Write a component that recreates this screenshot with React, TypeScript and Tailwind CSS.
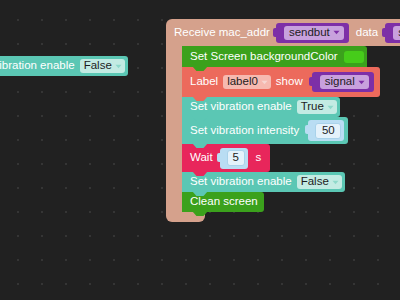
import React from "react";

const Arrow = ({ color }: { color: string }) => (
  <svg width="7" height="5" viewBox="0 0 7 5" className="ml-[3px] shrink-0">
    <path d="M0.5 0.8 L6.5 0.8 L3.5 4.2 Z" fill={color} />
  </svg>
);

const Tab = ({ cls }: { cls: string }) => (
  <div
    className={`absolute left-[10px] bottom-[-4px] w-[16px] h-[5px] z-10 [clip-path:polygon(0_0,100%_0,72%_100%,28%_100%)] ${cls}`}
  />
);

const Dropdown = ({ text, bg, arrow }: { text: string; bg: string; arrow: string }) => (
  <div className={`flex items-center shrink-0 h-[14px] pl-[4px] pr-[3px] rounded-[3px] text-[#1d1d1d] ${bg}`}>
    <span>{text}</span>
    <Arrow color={arrow} />
  </div>
);

const PurpleVar = ({ text, cut }: { text: string; cut?: boolean }) => (
  <div className="relative flex items-center shrink-0 h-[20px] bg-[#7d2fa7] rounded-[3px] pl-[8px] pr-[5px]">
    <div className="absolute left-[-3px] top-[5px] w-[5px] h-[9px] bg-[#7d2fa7] rounded-l-[2px]" />
    <div className="flex items-center h-[14px] pl-[5px] pr-[4px] rounded-[3px] bg-[#c8a1dd] text-[#1d1d1d]">
      <span>{text}</span>
      {!cut && <Arrow color="#7d2fa7" />}
    </div>
  </div>
);

const NumBlock = ({ text, w }: { text: string; w: string }) => (
  <div className="relative flex items-center shrink-0 h-[21px] bg-[#b9ddf3] rounded-[3px] pl-[7px] pr-[3px]">
    <div className="absolute left-[-3px] top-[5px] w-[5px] h-[9px] bg-[#b9ddf3] rounded-l-[2px]" />
    <div className={`flex items-center justify-center h-[16px] ${w} rounded-[3px] bg-[#e4f2fb] border border-[#a9d2ea] text-[#1d1d1d]`}>
      {text}
    </div>
  </div>
);

export default function App() {
  return (
    <div className="relative w-[400px] h-[300px] overflow-hidden whitespace-nowrap bg-[#212121] bg-[radial-gradient(circle,#353535_1px,transparent_1.2px)] bg-[size:24px_24px] bg-[position:6px_8px] font-['Liberation_Sans',Arial,sans-serif] text-[11.5px] text-white leading-none">
      {/* partial block on the left */}
      <div className="absolute left-[-35px] top-[56px] min-w-[163px] h-[20px] bg-[#5bc7b4] rounded-[3px] flex items-center pl-[8px] pr-[3px] gap-[5px]">
        <span className="shrink-0">Set vibration enable</span>
        <Dropdown text="False" bg="bg-[#c3ebe3]" arrow="#8fd9cb" />
      </div>

      {/* main receive block */}
      <div className="absolute left-[166px] top-[19px] flex flex-col">
        <div className="h-[27px] w-[260px] bg-[#d5a18c] rounded-tl-[6px] flex items-center pl-[8px] gap-[7px]">
          <span className="shrink-0 mr-[-1px]">Receive mac_addr</span>
          <PurpleVar text="sendbut" />
          <span className="shrink-0">data</span>
          <PurpleVar text="signa" cut />
        </div>
        <div className="flex">
          <div className="w-[16px] bg-[#d5a18c]" />
          <div className="flex flex-col items-start">
            <div className="relative h-[21px] min-w-[181px] bg-[#3ba11c] rounded-tr-[3px] flex items-center pl-[8px] pr-[3px] gap-[6px]">
              <span className="shrink-0">Set Screen backgroundColor</span>
              <div className="w-[20px] h-[12px] shrink-0 bg-[#46cc1a] rounded-[3px]" />
              <Tab cls="bg-[#3ba11c]" />
            </div>
            <div className="relative h-[30px] min-w-[198px] bg-[#ec6a5c] rounded-r-[3px] flex items-center pl-[8px] pr-[3px] gap-[5px]">
              <span className="shrink-0">Label</span>
              <Dropdown text="label0" bg="bg-[#f6b9b0]" arrow="#f6d6d1" />
              <span className="mr-[4px] shrink-0">show</span>
              <PurpleVar text="signal" />
              <Tab cls="bg-[#ec6a5c]" />
            </div>
            <div className="relative h-[20px] min-w-[157px] bg-[#5bc7b4] rounded-r-[3px] flex items-center pl-[8px] pr-[3px] gap-[5px]">
              <span className="shrink-0">Set vibration enable</span>
              <Dropdown text="True" bg="bg-[#c3ebe3]" arrow="#8fd9cb" />
              <Tab cls="bg-[#5bc7b4]" />
            </div>
            <div className="relative h-[27px] min-w-[166px] bg-[#5bc7b4] rounded-r-[3px] flex items-center pl-[8px] pr-[4px] gap-[9px]">
              <span className="shrink-0">Set vibration intensity</span>
              <NumBlock text="50" w="w-[26px]" />
              <Tab cls="bg-[#5bc7b4]" />
            </div>
            <div className="relative h-[28px] min-w-[88px] bg-[#e8265b] rounded-r-[3px] flex items-center pl-[8px] pr-[8px] gap-[7px]">
              <span className="shrink-0">Wait</span>
              <NumBlock text="5" w="w-[18px]" />
              <span className="ml-[1px] shrink-0">s</span>
              <Tab cls="bg-[#e8265b]" />
            </div>
            <div className="relative h-[20px] min-w-[160px] bg-[#5bc7b4] rounded-r-[3px] flex items-center pl-[8px] pr-[3px] gap-[5px]">
              <span className="shrink-0">Set vibration enable</span>
              <Dropdown text="False" bg="bg-[#c3ebe3]" arrow="#8fd9cb" />
              <Tab cls="bg-[#5bc7b4]" />
            </div>
            <div className="relative h-[20px] min-w-[82px] bg-[#3ba11c] rounded-r-[3px] flex items-center pl-[8px] pr-[6px]">
              <span className="shrink-0">Clean screen</span>
              <Tab cls="bg-[#3ba11c]" />
            </div>
          </div>
        </div>
        <div className="h-[10px] w-[39px] bg-[#d5a18c] rounded-b-[6px]" />
      </div>
    </div>
  );
}
